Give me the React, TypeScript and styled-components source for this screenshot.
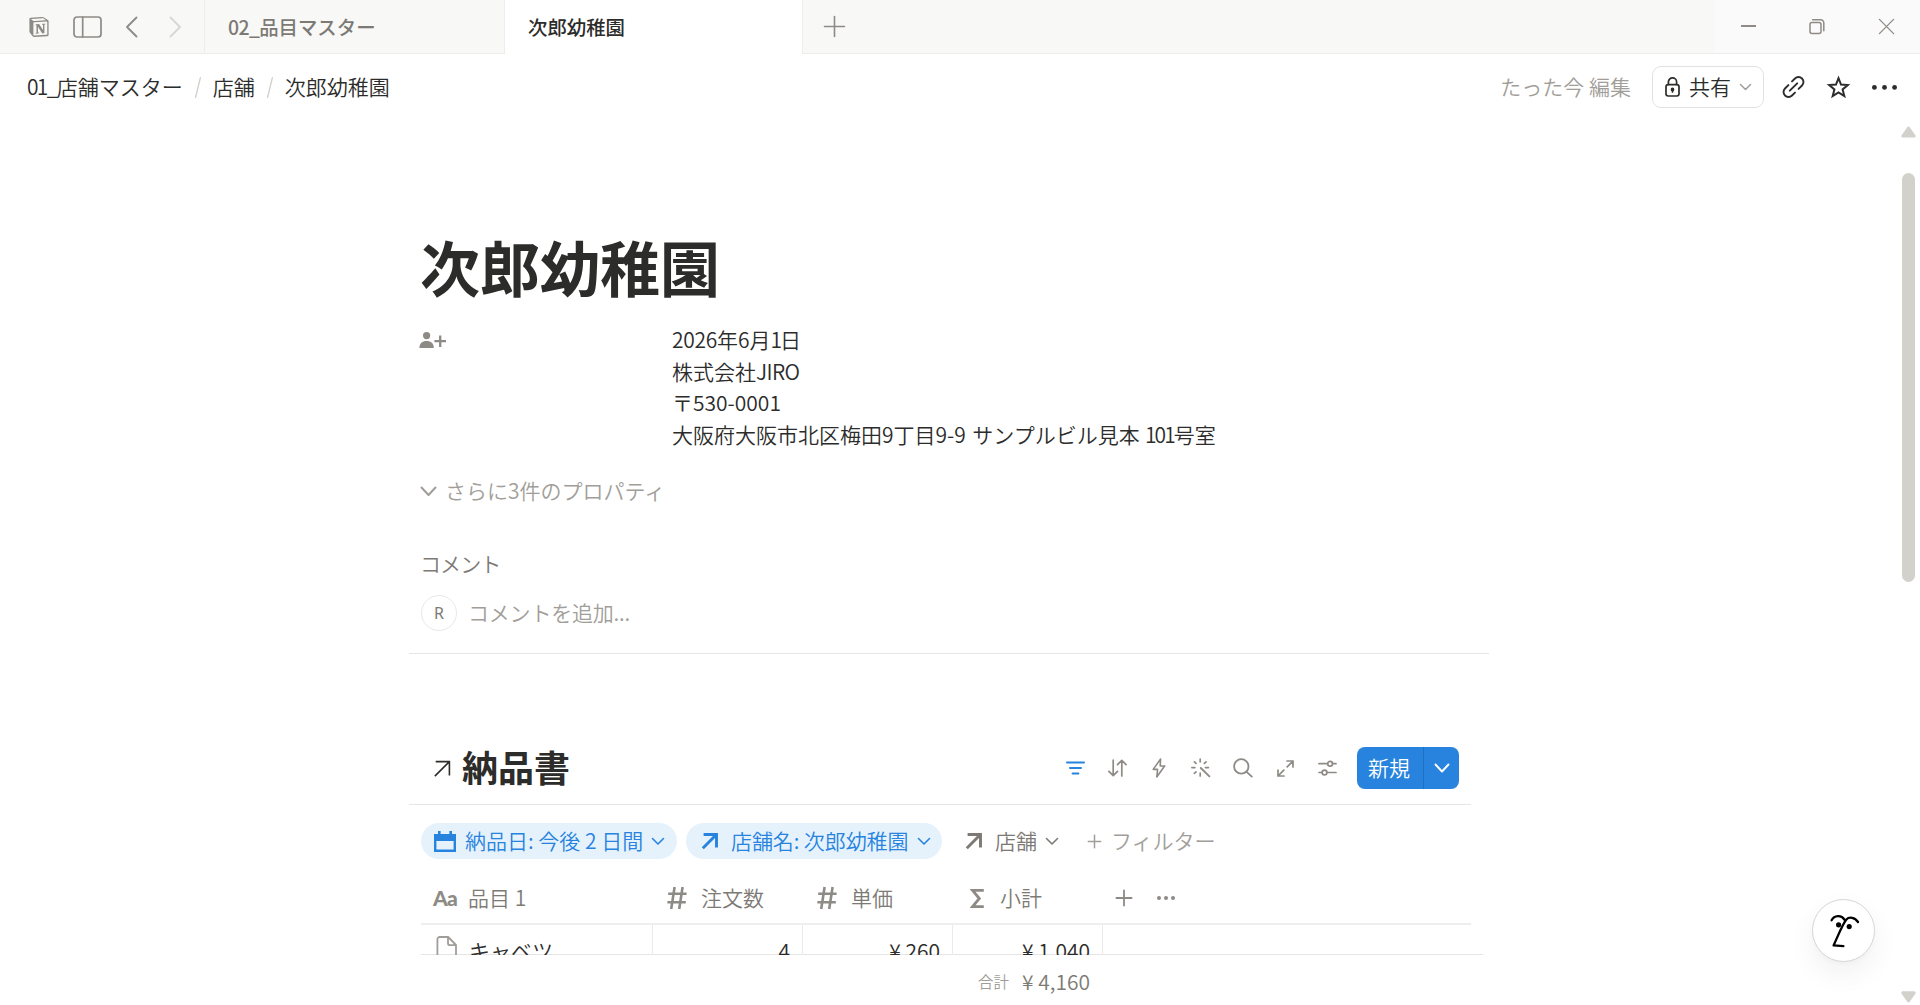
import React from "react";
import styled, { createGlobalStyle } from "styled-components";
import { SiNotion } from "react-icons/si";

const Global = createGlobalStyle`
  * { box-sizing: border-box; }
  body { margin: 0; background: #fff; overflow: hidden; }
`;

const INK = "#2c2c2b";
const GREY = "#7d7a75";
const SOFT = "#a19e99";
const ICON = "#8e8b86";
const BLUE = "#2783de";

const Window = styled.div`
  display: flex;
  flex-direction: column;
  width: 1920px;
  height: 1005px;
  overflow: hidden;
  background: #fff;
  color: ${INK};
  font-family: "Noto Sans CJK JP", "Noto Sans", sans-serif;
  font-size: 21px;
  font-weight: 350;
  white-space: nowrap;
`;

const TabBar = styled.header`
  display: flex;
  flex: none;
  height: 54px;
  background: #f8f8f7;
`;

const BarSection = styled.div<{ $w?: number; $pad?: number; $bg?: string }>`
  display: flex;
  align-items: center;
  padding-left: ${(p) => p.$pad ?? 0}px;
  ${(p) => (p.$w ? `width: ${p.$w}px;` : "flex: 1;")}
  background: ${(p) => p.$bg ?? "transparent"};
  border-bottom: 1px solid #ededec;
`;

const Tab = styled.div<{ $active?: boolean; $w: number }>`
  width: ${(p) => p.$w}px;
  height: 54px;
  padding: 0 0 0 23px;
  line-height: 54px;
  font-size: 19.4px;
  font-weight: 500;
  color: ${(p) => (p.$active ? INK : GREY)};
  background: ${(p) => (p.$active ? "#fff" : "transparent")};
  border-left: ${(p) => (p.$active ? "none" : "1px solid #ededec")};
  border-right: 1px solid #ededec;
  border-bottom: ${(p) => (p.$active ? "none" : "1px solid #ededec")};
`;

const Svg = styled.svg<{ $ml?: number }>`
  display: block;
  flex: none;
  margin-left: ${(p) => p.$ml ?? 0}px;
  fill: none;
  stroke: currentColor;
  stroke-linecap: round;
  stroke-linejoin: round;
  overflow: visible;
`;

const SharpSvg = styled(Svg)`
  stroke-linecap: butt;
  stroke-linejoin: miter;
`;

const Tint = styled.span<{ $c: string; $ml?: number }>`
  display: flex;
  flex: none;
  color: ${(p) => p.$c};
  margin-left: ${(p) => p.$ml ?? 0}px;
`;

const NavBar = styled.nav`
  display: flex;
  flex: none;
  align-items: center;
  height: 66px;
  padding: 0 23px 0 27px;
`;

const Text = styled.span<{ $c?: string; $ml?: number; $size?: number; $ls?: number; $w?: number }>`
  flex: none;
  padding-bottom: 2px;
  color: ${(p) => p.$c ?? "inherit"};
  margin-left: ${(p) => p.$ml ?? 0}px;
  font-size: ${(p) => p.$size ?? 21}px;
  letter-spacing: ${(p) => p.$ls ?? 0}px;
  ${(p) => (p.$w ? `width: ${p.$w}px;` : "")}
`;

const Tight = styled.span<{ $ls: number }>`
  letter-spacing: ${(p) => p.$ls}px;
`;

const Spacer = styled.div`
  flex: 1;
`;

const ShareButton = styled.button`
  display: flex;
  align-items: center;
  width: 112px;
  height: 42px;
  margin: 0 18px 0 21px;
  padding: 0 0 0 12px;
  border: 1px solid #e3e2e0;
  border-radius: 9px;
  background: #fff;
  color: ${INK};
  font: inherit;
`;

const Body = styled.div`
  display: flex;
  flex: 1;
  min-height: 0;
`;

const Page = styled.main`
  flex: 1;
  min-width: 0;
  padding-left: 409px;
  overflow: hidden;
`;

const Title = styled.h1`
  height: 74px;
  margin: 110px 0 0 11px;
  font-size: 60px;
  line-height: 72px;
  font-weight: 700;
`;

const PropertyRow = styled.section`
  display: flex;
  margin: 20px 0 0 10px;
  height: 126px;
`;

const PropertyIcon = styled.div`
  width: 253px;
  padding-top: 8px;
  color: ${ICON};
`;

const Address = styled.div`
  line-height: 31.5px;
`;

const Line = styled.div<{ $h: number; $mt: number; $pl?: number }>`
  display: flex;
  align-items: center;
  height: ${(p) => p.$h}px;
  margin-top: ${(p) => p.$mt}px;
  padding-left: ${(p) => p.$pl ?? 12}px;
`;

const Avatar = styled.div`
  width: 36px;
  height: 36px;
  border: 1px solid #e9e8e6;
  border-radius: 50%;
  color: ${GREY};
  font: 400 16px/35px "Noto Sans", sans-serif;
  text-align: center;
`;

const Divider = styled.hr<{ $w: number; $mt: number; $ml?: number }>`
  width: ${(p) => p.$w}px;
  height: 1px;
  margin: ${(p) => p.$mt}px 0 0 ${(p) => p.$ml ?? 0}px;
  border: 0;
  background: #e6e5e3;
`;

const DbTitle = styled.h2`
  flex: none;
  width: 592px;
  margin: 0 0 0 11px;
  padding-bottom: 4px;
  font-size: 36px;
  line-height: 42px;
  font-weight: 700;
`;

const Tools = styled.div`
  display: flex;
  flex: none;
  align-items: center;
  width: 303px;
  color: ${ICON};
`;

const Tool = styled.span<{ $on?: boolean }>`
  display: flex;
  flex: none;
  justify-content: center;
  width: 42px;
  color: ${(p) => (p.$on ? BLUE : "inherit")};
`;

const NewButton = styled.div`
  display: flex;
  flex: none;
  width: 102px;
  height: 42px;
  border-radius: 8px;
  background: ${BLUE};
  color: #fff;
  line-height: 40px;
`;

const NewLabel = styled.div`
  width: 67px;
  padding-left: 11px;
  border-right: 1px solid #2070c0;
`;

const NewMenu = styled.div`
  display: flex;
  flex: 1;
  align-items: center;
  justify-content: center;
`;

const Pill = styled.div<{ $pl: number }>`
  display: flex;
  align-items: center;
  width: 256px;
  height: 36px;
  margin-right: 9px;
  padding-left: ${(p) => p.$pl}px;
  border-radius: 18px;
  background: #e5f2fc;
  color: ${BLUE};
`;

const Grid = styled.div`
  display: grid;
  grid-template-columns: 232px 150px 150px 150px 1fr;
  width: 1050px;
  margin-left: 12px;
`;

const HeadGrid = styled(Grid)`
  height: 52px;
  margin-top: 14px;
  border-bottom: 2px solid #eeeeec;
  color: ${GREY};
`;

const HeadCell = styled.div<{ $pl: number }>`
  display: flex;
  align-items: center;
  padding-left: ${(p) => p.$pl}px;
`;

const RowGrid = styled(Grid)`
  height: 30px;
  overflow: hidden;
`;

const Cell = styled.div<{ $right?: boolean; $last?: boolean }>`
  display: flex;
  justify-content: ${(p) => (p.$right ? "flex-end" : "flex-start")};
  height: 50px;
  padding: 10px ${(p) => (p.$right ? 12 : 0)}px 0 ${(p) => (p.$right ? 0 : 15)}px;
  line-height: 31px;
  border-right: ${(p) => (p.$last ? "none" : "1px solid #ebebea")};
`;

const TypeMark = styled.span`
  width: 35px;
  color: ${ICON};
  font: 900 21px/30px Lato, sans-serif;
  letter-spacing: -0.8px;
`;

const Sum = styled.div`
  display: flex;
  align-items: center;
  height: 50px;
  padding-left: 569px;
  margin-top: 2px;
`;

const ScrollTrack = styled.aside`
  display: flex;
  flex-direction: column;
  align-items: center;
  width: 23px;
  padding: 6px 0 2px;
  color: #d3d1cb;
`;

const Thumb = styled.div`
  width: 13px;
  height: 409px;
  margin: 35px 0 auto;
  border-radius: 7px;
  background: #d3d1cb;
`;

const AssistantButton = styled.button`
  position: fixed;
  right: 45px;
  bottom: 43px;
  display: flex;
  align-items: center;
  justify-content: center;
  width: 63px;
  height: 63px;
  padding: 0 0 0 2px;
  border: 1px solid #d6d5d2;
  border-radius: 50%;
  background: #fff;
  color: #000;
  box-shadow: 0 12px 28px rgba(0, 0, 0, 0.06), 0 2px 6px rgba(0, 0, 0, 0.03);
`;

const Chevron = ({ w = 12, h = 6.5, s = 1.6, ml = 0 }: { w?: number; h?: number; s?: number; ml?: number }) => (
  <Svg $ml={ml} width={w} height={h} viewBox={`0 0 ${w} ${h}`} strokeWidth={s}>
    <path d={`M.5 .5L${w / 2} ${h - 0.5}L${w - 0.5} .5`} />
  </Svg>
);

const Plus = ({ size, s = 1.6 }: { size: number; s?: number }) => (
  <Svg width={size} height={size} viewBox="0 0 20 20" strokeWidth={(s * 20) / size}>
    <path d="M10 .5v19M.5 10h19" />
  </Svg>
);

const Dots = ({ w, r, ml = 0 }: { w: number; r: number; ml?: number }) => (
  <Svg $ml={ml} width={w} height={r * 2} viewBox={`0 0 ${w} ${r * 2}`}>
    {[r, w / 2, w - r].map((x) => (
      <circle key={x} cx={x} cy={r} r={r} fill="currentColor" stroke="none" />
    ))}
  </Svg>
);

const Arrow = ({ size, s }: { size: number; s: number }) => (
  <SharpSvg width={size} height={size} viewBox="0 0 16 16" strokeWidth={s}>
    <path d="M.8 15.2L14.2 1.8M1.6 1.5h12.9v13" />
  </SharpSvg>
);

const Hash = () => (
  <SharpSvg width="20" height="22" viewBox="0 0 20 22" strokeWidth="2.6">
    <path d="M7.6 0L4.2 22M15.6 0L12.2 22M1.2 6.7h18.4M.4 15.3h18.4" />
  </SharpSvg>
);

const Sigma = () => (
  <SharpSvg width="14" height="19" viewBox="0 0 14 19" strokeWidth="2.8">
    <path d="M13.8 1.4H2.6L9.3 9.5L2.6 17.6H13.8" />
  </SharpSvg>
);

const CrumbSlash = () => (
  <Svg width="6" height="21" viewBox="0 0 6 21" strokeWidth="1.4">
    <path d="M.6 20.4L5.4 .6" />
  </Svg>
);

const Triangle = ({ down }: { down?: boolean }) => (
  <Svg width="15" height="12" viewBox="0 0 15 12" strokeWidth="3">
    <path d={down ? "M1.8 1.8h11.4L7.5 9.8z" : "M1.8 10h11.4L7.5 2z"} fill="currentColor" />
  </Svg>
);

export default function App() {
  return (
    <Window>
      <Global />
      <TabBar>
        <BarSection $w={204} $pad={29}>
          <Tint $c={ICON}>
            <SiNotion size={20} />
          </Tint>
          <Tint $c={ICON} $ml={24}>
            <Svg width="29" height="22" viewBox="0 0 29 22" strokeWidth="1.7">
              <rect x="1" y="1" width="27" height="20" rx="3" />
              <path d="M9.7 1v20" />
            </Svg>
          </Tint>
          <Tint $c={ICON} $ml={24}>
            <Svg width="11" height="20" viewBox="0 0 11 20" strokeWidth="1.8">
              <path d="M10.5 .5L1 10l9.5 9.5" />
            </Svg>
          </Tint>
          <Tint $c="#d8d7d4" $ml={33}>
            <Svg width="11" height="20" viewBox="0 0 11 20" strokeWidth="1.8">
              <path d="M.5 .5L10 10L.5 19.5" />
            </Svg>
          </Tint>
        </BarSection>
        <Tab $w={301}>
          <Tight $ls={-0.6}>02_</Tight>品目マスター
        </Tab>
        <Tab $w={298} $active>
          次郎幼稚園
        </Tab>
        <BarSection $pad={21}>
          <Tint $c={ICON}>
            <Plus size={21} s={1.6} />
          </Tint>
        </BarSection>
        <BarSection $w={205} $pad={26} $bg="#fafafa">
          <Tint $c={ICON}>
            <SharpSvg width="15" height="15" viewBox="0 0 15 15" strokeWidth="2">
              <path d="M0 7h15" />
            </SharpSvg>
          </Tint>
          <Tint $c={ICON} $ml={53}>
            <Svg width="16" height="15" viewBox="0 0 16 15" strokeWidth="1.5">
              <rect x="1" y="3.4" width="11" height="11" rx="2" />
              <path d="M3.6 .8h8.2a3 3 0 0 1 3 3v8" />
            </Svg>
          </Tint>
          <Tint $c={ICON} $ml={54}>
            <Svg width="15" height="15" viewBox="0 0 15 15" strokeWidth="1.3">
              <path d="M.4 .4l14.2 14.2M14.6 .4L.4 14.6" />
            </Svg>
          </Tint>
        </BarSection>
      </TabBar>

      <NavBar>
        <Text>
          <Tight $ls={-1.7}>01_</Tight>店舗マスター
        </Text>
        <Tint $c="#d3d1cb" $ml={12}>
          <CrumbSlash />
        </Tint>
        <Text $ml={12}>店舗</Text>
        <Tint $c="#d3d1cb" $ml={12}>
          <CrumbSlash />
        </Tint>
        <Text $ml={12}>次郎幼稚園</Text>
        <Spacer />
        <Text $c={SOFT}>たった今 編集</Text>
        <ShareButton>
          <Svg width="15" height="20" viewBox="0 0 15 20" strokeWidth="1.7">
            <rect x="1" y="7.6" width="13" height="11.4" rx="2.2" />
            <path d="M3.4 7.4V5a4.1 4.1 0 0 1 8.2 0v2.4M7.5 12.6v2.4" />
            <circle cx="7.5" cy="12.4" r="1" fill="currentColor" />
          </Svg>
          <Text $ml={9}>共有</Text>
          <Tint $c={SOFT}>
            <Chevron ml={9} w={11} h={6} s={1.5} />
          </Tint>
        </ShareButton>
        <Svg width="23" height="22" viewBox="0 0 23 22" strokeWidth="1.9">
          <path d="M10 5.4L13 2.5a4.9 4.9 0 0 1 7 0a4.9 4.9 0 0 1 0 7L16.6 12.9M13 16.6L10 19.5a4.9 4.9 0 0 1-7 0a4.9 4.9 0 0 1 0-7L6.4 9.1M7.8 14.7l7.4-7.4" />
        </Svg>
        <SharpSvg $ml={22} width="23" height="22" viewBox="0 0 23 22" strokeWidth="2">
          <path d="M11.5 2.2l2.5 6.3 6.8.5-5.2 4.4 1.7 6.6-5.8-3.6-5.8 3.6 1.7-6.6L2.2 9l6.8-.5z" />
        </SharpSvg>
        <Dots ml={22} w={25} r={2.4} />
      </NavBar>

      <Body>
        <Page>
          <Title>次郎幼稚園</Title>
          <PropertyRow>
            <PropertyIcon>
              <SharpSvg width="27" height="16" viewBox="0 0 27 16" strokeWidth="2.3">
                <circle cx="7.6" cy="3.6" r="3.6" fill="currentColor" stroke="none" />
                <path d="M.4 16c0-4.4 2.8-7 7.2-7s7.2 2.6 7.2 7z" fill="currentColor" stroke="none" />
                <path d="M15.4 9.2H27M21.2 3.4v11.6" />
              </SharpSvg>
            </PropertyIcon>
            <Address>
              <Tight $ls={-0.3}>2026</Tight>年6月<Tight $ls={-2}>1</Tight>日
              <br />
              株式会社<Tight $ls={-0.6}>JIRO</Tight>
              <br />
              〒530-0001
              <br />
              大阪府大阪市北区梅田9丁目9-9<Tight $ls={1.8}> </Tight>サンプルビル見本
              <Tight $ls={0.6}> </Tight>
              <Tight $ls={-1.9}>101</Tight>号室
            </Address>
          </PropertyRow>

          <Line $h={42} $mt={20}>
            <Tint $c={SOFT}>
              <Chevron w={15} h={8.5} s={2} />
            </Tint>
            <Text $c={SOFT} $ml={9}>
              さらに3件のプロパティ
            </Text>
          </Line>
          <Line $h={30} $mt={37} $pl={11}>
            <Text $c={GREY} $ls={-0.9}>
              コメント
            </Text>
          </Line>
          <Line $h={37} $mt={15}>
            <Avatar>R</Avatar>
            <Text $c={SOFT} $ml={11} $ls={-0.2}>
              コメントを追加...
            </Text>
          </Line>
          <Divider $w={1080} $mt={22} />

          <Line $h={42} $mt={93} $pl={25}>
            <Arrow size={17} s={1.5} />
            <DbTitle>納品書</DbTitle>
            <Tools>
              <Tool $on>
                <Svg width="19" height="14" viewBox="0 0 19 14" strokeWidth="2">
                  <path d="M1 1.4h17M4 7h11M6.6 12.6h5.8" />
                </Svg>
              </Tool>
              <Tool>
                <Svg width="19" height="18" viewBox="0 0 19 18" strokeWidth="1.7">
                  <path d="M5.2 1v15.4M.9 12.4l4.3 4.2 4.3-4.2M13.8 17V1.6M9.5 5.6l4.3-4.2 4.3 4.2" />
                </Svg>
              </Tool>
              <Tool>
                <Svg width="14" height="20" viewBox="0 0 14 20" strokeWidth="1.6">
                  <path d="M8.6 1L1.2 11.4h4.4L4.8 19l7.8-11H8.2z" />
                </Svg>
              </Tool>
              <Tool>
                <Svg width="20" height="20" viewBox="0 0 20 20" strokeWidth="1.7">
                  <path d="M9.2 1v2.8M9.2 15.2V18M.9 9.6h3M14.4 9.6h3M3.4 3.8l1.6 1.6M15 3.8l-1.6 1.6M3.4 15.4L5 13.8" />
                  <path d="M9.8 10l8.6 8.4" strokeWidth="1.9" />
                </Svg>
              </Tool>
              <Tool>
                <Svg width="20" height="20" viewBox="0 0 20 20" strokeWidth="1.8">
                  <circle cx="8.3" cy="8.4" r="7.2" />
                  <path d="M13.6 13.8l5.2 4.8" />
                </Svg>
              </Tool>
              <Tool>
                <Svg width="17" height="17" viewBox="0 0 17 17" strokeWidth="1.7">
                  <path d="M10 1h6v6M16 1l-5.8 5.8M7 16H1v-6M1 16l5.8-5.8" />
                </Svg>
              </Tool>
              <Tool>
                <Svg width="19" height="14" viewBox="0 0 19 14" strokeWidth="1.7">
                  <path d="M1 2.7h8.6M14.6 2.7H18M1 11.5h3M9 11.5h9" />
                  <circle cx="12.1" cy="2.7" r="2.4" />
                  <circle cx="6.5" cy="11.5" r="2.4" />
                </Svg>
              </Tool>
            </Tools>
            <NewButton>
              <NewLabel>新規</NewLabel>
              <NewMenu>
                <Chevron w={14} h={8} s={1.9} />
              </NewMenu>
            </NewButton>
          </Line>
          <Divider $w={1062} $mt={15} />

          <Line $h={36} $mt={18}>
            <Pill $pl={13}>
              <Svg width="22" height="21" viewBox="0 0 22 21">
                <path d="M4 0h2.6v3h8.8V0H18v3h4v18H0V3h4zM2.4 10v8.6h17.2V10z" fill="currentColor" fillRule="evenodd" stroke="none" />
              </Svg>
              <Text $ml={9} $w={178}>
                納品日: 今後 2 日間
              </Text>
              <Chevron ml={9} />
            </Pill>
            <Pill $pl={16}>
              <Arrow size={16} s={2.9} />
              <Text $ml={13} $w={178} $ls={-0.1}>
                店舗名: 次郎幼稚園
              </Text>
              <Chevron ml={9} />
            </Pill>
            <Tint $c={GREY} $ml={15}>
              <Arrow size={16} s={2.9} />
            </Tint>
            <Text $c={GREY} $ml={13}>
              店舗
            </Text>
            <Tint $c={GREY}>
              <Chevron ml={9} />
            </Tint>
            <Tint $c={SOFT} $ml={30}>
              <Plus size={13} s={1.5} />
            </Tint>
            <Text $c={SOFT} $ml={10}>
              フィルター
            </Text>
          </Line>

          <HeadGrid>
            <HeadCell $pl={12}>
              <TypeMark>Aa</TypeMark>
              <Text>品目 1</Text>
            </HeadCell>
            <HeadCell $pl={14}>
              <Tint $c={ICON}>
                <Hash />
              </Tint>
              <Text $ml={14}>注文数</Text>
            </HeadCell>
            <HeadCell $pl={14}>
              <Tint $c={ICON}>
                <Hash />
              </Tint>
              <Text $ml={14}>単価</Text>
            </HeadCell>
            <HeadCell $pl={17}>
              <Tint $c={ICON}>
                <Sigma />
              </Tint>
              <Text $ml={16}>小計</Text>
            </HeadCell>
            <HeadCell $pl={13}>
              <Tint $c={ICON}>
                <Plus size={16} s={1.8} />
              </Tint>
              <Tint $c={ICON} $ml={25}>
                <Dots w={18} r={2} />
              </Tint>
            </HeadCell>
          </HeadGrid>
          <RowGrid>
            <Cell>
              <Tint $c={SOFT}>
                <Svg width="21" height="25" viewBox="0 -1 21 25" strokeWidth="1.8">
                  <path d="M4 1h8.2l7.8 8v13a2 2 0 0 1-2 2H3.4a2 2 0 0 1-2-2V3.4A2.4 2.4 0 0 1 4 1zM12 1.4v5.8a2 2 0 0 0 2 2h5.6" />
                </Svg>
              </Tint>
              <Text $ml={12}>キャベツ</Text>
            </Cell>
            <Cell $right>4</Cell>
            <Cell $right>¥ 260</Cell>
            <Cell $right>¥ 1,040</Cell>
            <Cell $last />
          </RowGrid>
          <Divider $w={1062} $mt={-1} $ml={12} />
          <Sum>
            <Text $c={SOFT} $size={15.5}>
              合計
            </Text>
            <Text $c={GREY} $ml={13}>
              ¥ 4,160
            </Text>
          </Sum>
        </Page>
        <ScrollTrack>
          <Triangle />
          <Thumb />
          <Triangle down />
        </ScrollTrack>
      </Body>

      <AssistantButton aria-label="AI">
        <Svg width="30" height="34" viewBox="0 0 30 34" strokeWidth="2.3">
          <path d="M1.6 6.2C4.2 1.4 11.4.6 14.4 5.6M28 8C25 3.4 19.2 2.4 16.4 5.6C13 9.4 9 19.6 3.6 31.4L13.4 32.2" />
          <circle cx="8.6" cy="10.8" r="2.6" fill="currentColor" stroke="none" />
          <circle cx="19.2" cy="12.6" r="2.6" fill="currentColor" stroke="none" />
        </Svg>
      </AssistantButton>
    </Window>
  );
}
